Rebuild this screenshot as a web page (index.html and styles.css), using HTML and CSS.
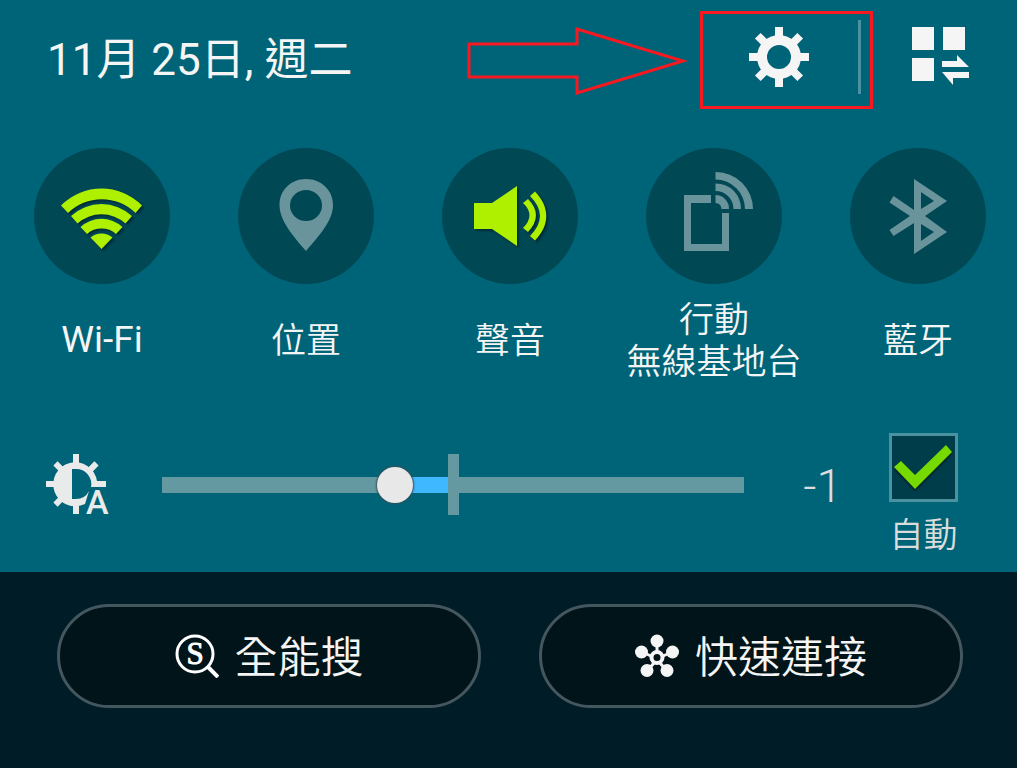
FILE: index.html
```html
<!DOCTYPE html>
<html lang="zh-Hant">
<head>
<meta charset="utf-8">
<meta name="viewport" content="width=device-width, initial-scale=1">
<title>快速設定</title>
<link rel="stylesheet" href="styles.css">
</head>
<body>
<main class="panel">
  <header class="header">
    <h1 class="date">11月 25日, 週二</h1>
    <svg class="arrow" viewBox="0 0 222 70" aria-hidden="true"><path d="M3 19H111V4L217 36L111 68V52H3Z" fill="none" stroke="#f81820" stroke-width="3"/></svg>
    <div class="highlight">
      <button class="icon-button" type="button" aria-label="設定">
        <svg class="gear" viewBox="-30 -30 60 60">
          <g fill="#f5f5f5">
            <path fill-rule="evenodd" d="M0-22A22 22 0 1 1 0 22A22 22 0 1 1 0-22ZM0-12A12 12 0 1 0 0 12A12 12 0 1 0 0-12Z"/>
            <path d="M-4-30H4V-18H-4ZM-4 18H4V30H-4ZM-30-4H-18V4H-30ZM18-4H30V4H18Z"/>
            <path transform="rotate(45)" d="M-4-30H4V-18H-4ZM-4 18H4V30H-4ZM-30-4H-18V4H-30ZM18-4H30V4H18Z"/>
          </g>
        </svg>
      </button>
      <span class="divider"></span>
    </div>
    <button class="icon-button apps" type="button" aria-label="編輯面板">
      <svg class="apps-icon" viewBox="0 0 58 58"><path fill="#f5f5f5" d="M0 0H22V23H0ZM31 0H53V23H31ZM0 31H22V54H0ZM30 34H45V28L57 40H30ZM30 45H57V51H41V58Z"/></svg>
    </button>
  </header>

  <section class="toggles" aria-label="快速切換">
    <button class="toggle" type="button" aria-pressed="true">
      <span class="disc"><svg viewBox="0 0 136 136"><g class="on">
        <path d="M27 57.500A57 57 0 0 1 108 57.500L101.500 65A48 48 0 0 0 34 65Z"/>
        <path d="M37 68A45 45 0 0 1 98 68L91.500 75.500A36 36 0 0 0 43.500 75.500Z"/>
        <path d="M46.500 79A31 31 0 0 1 88.500 79L82 86A22 22 0 0 0 53 86Z"/>
        <path d="M56.500 89.500A17 17 0 0 1 78.500 89.500L67.500 101Z"/></g></svg></span>
      <span class="label label-latin">Wi-Fi</span>
    </button>
    <button class="toggle" type="button" aria-pressed="false">
      <span class="disc"><svg viewBox="0 0 136 136"><path class="off" fill-rule="evenodd" d="M68 31C53 31 41.500 42 41.500 57C41.500 73 56 89 68 103C80 89 95 73 95 57C95 42 83 31 68 31ZM68 42A16 15.500 0 1 1 68 73A16 15.500 0 1 1 68 42Z"/></svg></span>
      <span class="label">位置</span>
    </button>
    <button class="toggle" type="button" aria-pressed="true">
      <span class="disc"><svg viewBox="0 0 136 136"><g class="on">
        <path d="M32 55H50L75 38V98L50 81H32Z"/>
        <path d="M81 55L86 51Q102 67 86 84L81 80Q94 67 81 55Z"/>
        <path d="M88 48L93 43.500C108 59 108 77 93 92.500L88 88Q108 68 88 48Z"/></g></svg></span>
      <span class="label">聲音</span>
    </button>
    <button class="toggle" type="button" aria-pressed="false">
      <span class="disc"><svg viewBox="0 0 136 136">
        <path class="off" d="M65 47V55H45V96H76V65H83V103H38V47Z"/>
        <path class="off" d="M69.500 47A13.500 13.500 0 0 1 83 61H75.500Q75 55 69.500 55ZM69.500 35.500A25 25 0 0 1 95 61H87.500A18 18 0 0 0 69.500 43ZM69.500 24A37 37 0 0 1 107 61H99A29.500 29.500 0 0 0 69.500 31.500Z"/></svg></span>
      <span class="label">行動<br>無線基地台</span>
    </button>
    <button class="toggle" type="button" aria-pressed="false">
      <span class="disc"><svg viewBox="0 0 136 136"><path class="off" fill-rule="evenodd" d="M64 31L97 53L75 68L97 84L64 106V75L43.500 88L39.500 82L60 68L39.500 54.500L43.500 48L64 62ZM71 44V61L84 53ZM71 76V93L84 84Z"/></svg></span>
      <span class="label">藍牙</span>
    </button>
  </section>

  <section class="brightness" aria-label="亮度">
    <svg class="sun" viewBox="-30 -30 68 74" role="img" aria-label="自動亮度">
      <g fill="#e9ebeb">
        <path d="M-3-30H3V-18H-3ZM-3 18H3V30H-3ZM-30-3H-18V3H-30Z"/>
        <path transform="rotate(45)" d="M-3-29H3V-18H-3ZM-3 18H3V29H-3ZM-29-3H-18V3H-29Z"/>
        <path d="M21-3H30V3H15A15 15 0 0 0 0-15H-4V15H0Q9 15 13 7L9 20A22 22 0 1 1 21-3Z"/>
      </g>
      <text class="sun-letter" x="10" y="30">A</text>
    </svg>
    <input class="slider" type="range" min="-5" max="5" value="-1" aria-label="亮度">
    <output class="value">-1</output>
    <label class="auto">
      <span class="check">
        <input class="box" type="checkbox" checked>
        <svg class="tick" viewBox="0 0 69 69" aria-hidden="true"><path d="M5 34L12 28L26 42L57 12L63 19L26 56Z"/></svg>
      </span>
      <span class="auto-label">自動</span>
    </label>
  </section>
</main>

<footer class="actions">
  <button class="pill" type="button">
    <svg class="pill-icon" viewBox="0 0 44 44" aria-hidden="true"><circle cx="20" cy="20" r="18" fill="none" stroke="#fff" stroke-width="3"/><path d="M32 32L43 43" stroke="#fff" stroke-width="4"/><text class="search-letter" x="20" y="30">S</text></svg>
    <span class="pill-text">全能搜</span>
  </button>
  <button class="pill" type="button">
    <svg class="pill-icon" viewBox="0 0 44 44" aria-hidden="true"><g fill="#f5f5f5" stroke="#f5f5f5"><path d="M22 17V8M16 22L7 18M28 22L37 18M19 29L12 37M25 29L32 37" stroke-width="3"/><g stroke="none"><circle cx="22" cy="7" r="6.500"/><circle cx="6.500" cy="18" r="6.500"/><circle cx="37.500" cy="18" r="6.500"/><circle cx="12" cy="36.500" r="6.500"/><circle cx="32" cy="36.500" r="6.500"/></g><circle cx="22" cy="23.500" r="5.500" fill="none" stroke-width="4"/></g></svg>
    <span class="pill-text">快速連接</span>
  </button>
</footer>
</body>
</html>
```
FILE: styles.css
```css
* { box-sizing: border-box; }

body {
  margin: 0;
  min-height: 100vh;
  display: flex;
  flex-direction: column;
  background: #001c26;
  color: #f5f5f5;
  font-family: Roboto, "Noto Sans CJK TC", sans-serif;
  font-weight: 350;
}

button {
  padding: 0;
  border: 0;
  background: none;
  color: inherit;
  font: inherit;
  cursor: pointer;
}

svg { display: block; }

.panel {
  background: #006478;
  padding-bottom: 16px;
}

.header {
  display: flex;
  align-items: center;
  padding: 11px 47px 0 47px;
}

.date {
  margin: 0 auto 0 0;
  font-size: 44px;
  line-height: 60px;
  font-weight: 400;
  white-space: nowrap;
}

.arrow {
  width: 222px;
  height: 70px;
  margin-right: 12px;
}

.highlight {
  display: flex;
  align-items: flex-start;
  justify-content: space-between;
  width: 173px;
  height: 98px;
  padding: 6px 9px 0 46px;
  border: 3px solid #f81820;
}

.icon-button { padding: 7px 0; }

.gear {
  width: 60px;
  height: 60px;
}

.divider {
  width: 3px;
  height: 74px;
  background: #4a92a0;
}

.apps {
  margin-left: 39px;
  padding: 0 0 8px;
}

.apps-icon {
  width: 58px;
  height: 58px;
}

.toggles {
  display: flex;
  justify-content: space-between;
  padding: 39px 31px 0 34px;
}

.toggle {
  display: flex;
  flex-direction: column;
  align-items: center;
  width: 136px;
}

.disc {
  width: 136px;
  height: 136px;
  border-radius: 50%;
  background: #004854;
}

.on {
  fill: #aef000;
  filter: drop-shadow(2px 2px 1px #002c38);
}

.off { fill: #6a949b; }

.label {
  display: flex;
  align-items: center;
  min-height: 84px;
  margin-top: 16px;
  font-size: 35px;
  line-height: 42px;
  white-space: nowrap;
}

.label-latin {
  padding-bottom: 4px;
  font-size: 37px;
  font-weight: 400;
}

.brightness {
  display: flex;
  align-items: flex-start;
  padding: 49px 59px 0 46px;
}

.sun {
  width: 68px;
  height: 74px;
  margin-top: 21px;
}

.sun-letter {
  font: 500 34px Roboto, sans-serif;
  fill: #e9ebeb;
  stroke: #006478;
  stroke-width: 4px;
  paint-order: stroke;
}

.slider {
  flex: 1;
  min-width: 0;
  height: 61px;
  margin: 21px 0 0 30px;
  appearance: none;
  background:
    linear-gradient(#6599a2, #6599a2) center / 11px 61px no-repeat,
    linear-gradient(90deg, #6599a2 40%, #40b8ff 40% 50%, #6599a2 50%) center / calc(100% - 36px) 16px no-repeat;
}

.slider::-webkit-slider-thumb {
  appearance: none;
  width: 36px;
  height: 36px;
  border-radius: 50%;
  background: #e8e8e8;
  box-shadow: 0 0 2px 1px #34505a;
}

.value {
  width: 80px;
  margin: 23px 47px 0 0;
  font-size: 46px;
  line-height: 60px;
  font-weight: 300;
  text-align: right;
  color: #dcdcdc;
}

.auto {
  display: flex;
  flex-direction: column;
  align-items: center;
}

.check { display: grid; }

.box, .tick {
  grid-area: 1 / 1;
  width: 69px;
  height: 69px;
}

.box {
  margin: 0;
  appearance: none;
  border: 3px solid #4a92a0;
  background: #003d4a;
}

.tick {
  visibility: hidden;
  pointer-events: none;
  z-index: 1;
  fill: #76d900;
  filter: drop-shadow(0 2px 1px #001c26);
}

.box:checked + .tick { visibility: visible; }

.auto-label {
  margin-top: 13px;
  font-size: 34px;
  line-height: 41px;
  color: #dcdcdc;
}

.actions {
  display: flex;
  gap: 58px;
  padding: 32px 54px 60px 57px;
}

.pill {
  flex: 1;
  display: flex;
  align-items: center;
  justify-content: center;
  gap: 16px;
  height: 104px;
  border: 3px solid #44575e;
  border-radius: 52px;
  background: #001419;
  font-size: 43px;
  line-height: 60px;
}

.pill-icon {
  width: 44px;
  height: 44px;
}

.pill-text { padding-top: 4px; }

.search-letter {
  font: 400 31px "Liberation Serif", serif;
  fill: #fff;
  stroke: #fff;
  stroke-width: 1px;
  text-anchor: middle;
}
```
